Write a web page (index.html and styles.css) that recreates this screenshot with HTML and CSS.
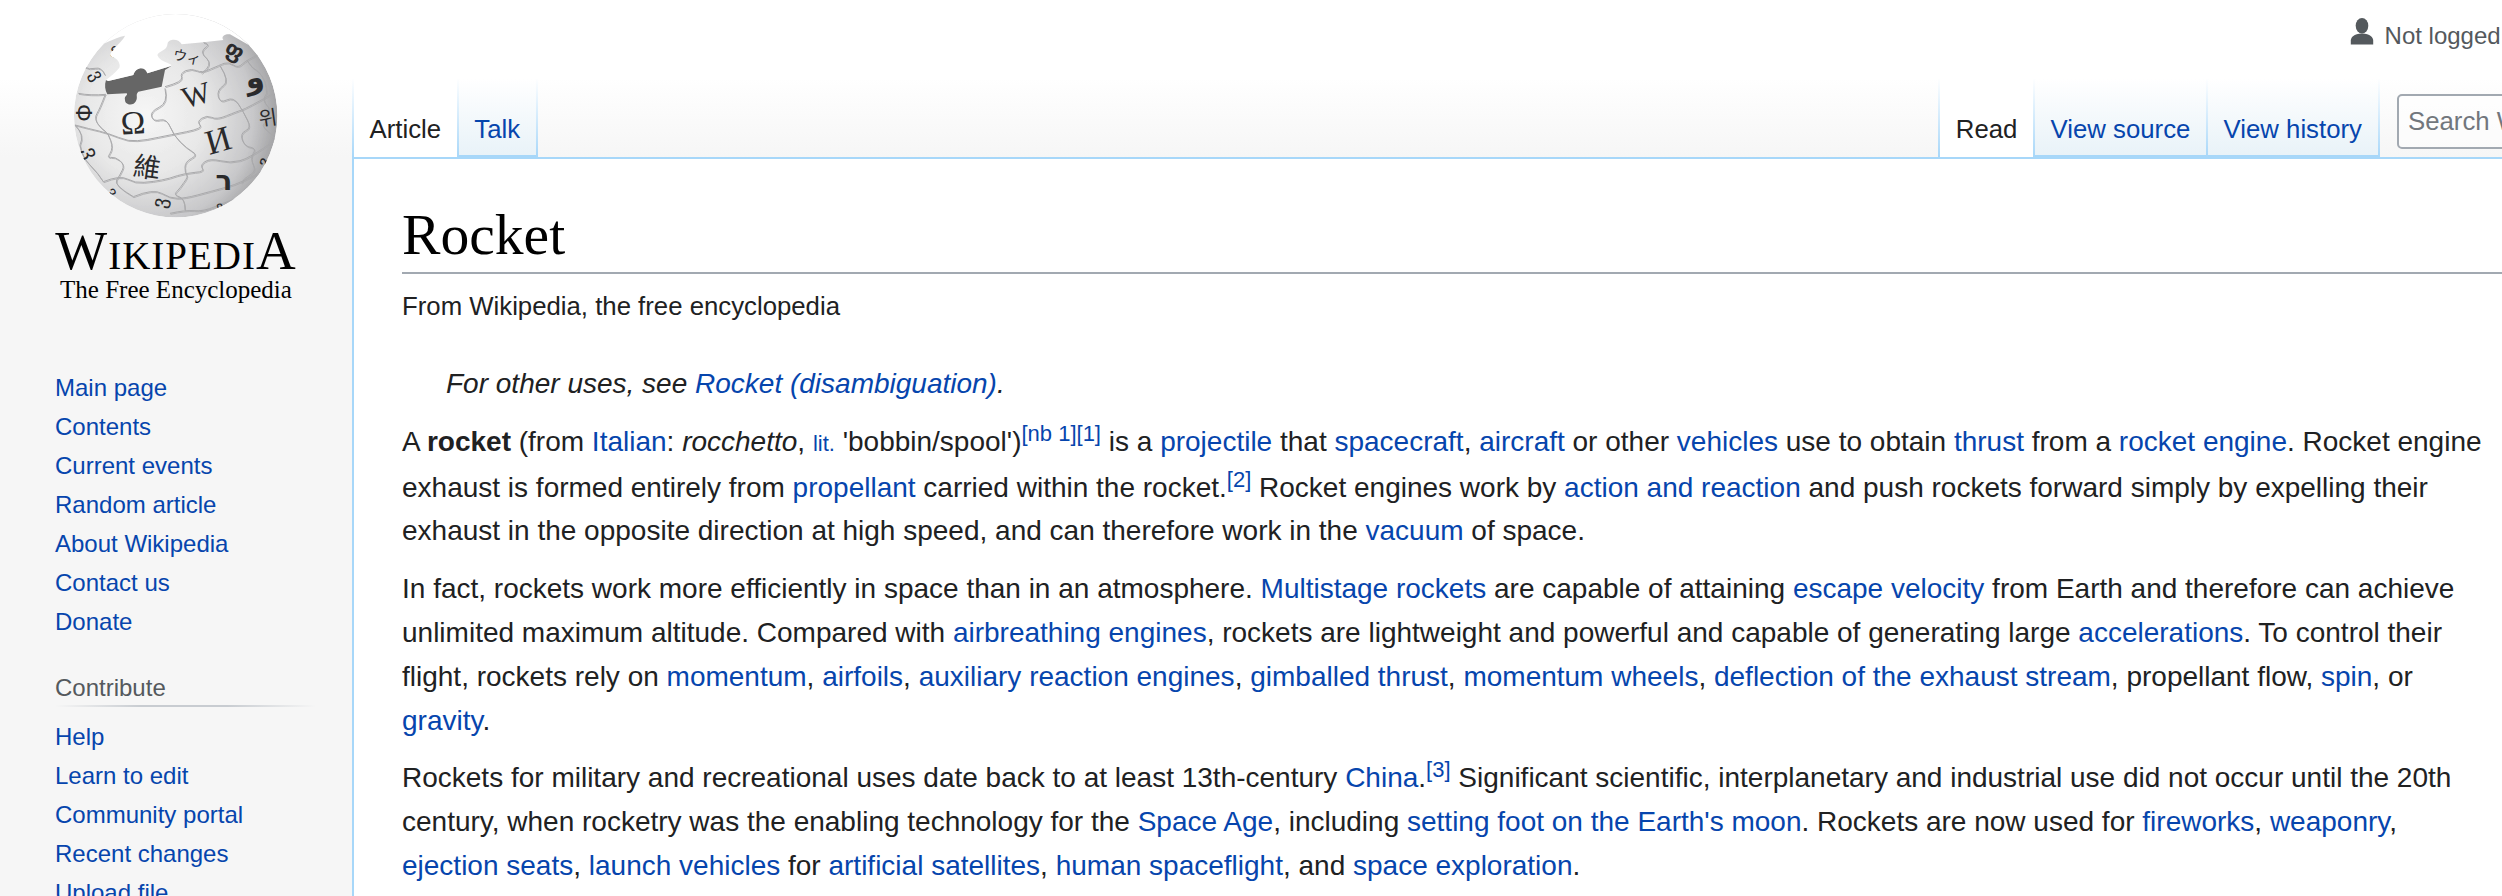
FILE: index.html
```html
<!DOCTYPE html>
<html lang="en">
<head>
<meta charset="utf-8">
<title>Rocket - Wikipedia</title>
<link rel="stylesheet" href="styles.css">
</head>
<body>
<div class="page">
  <aside class="side">
    <div class="logo">
      <svg class="globe" width="352" height="226" viewBox="0 0 352 226" xmlns="http://www.w3.org/2000/svg">
        <defs>
          <radialGradient id="ball" gradientUnits="userSpaceOnUse" cx="145" cy="115" r="150">
            <stop offset="0" stop-color="#f6f6f6"/>
            <stop offset=".4" stop-color="#e8e8e8"/>
            <stop offset=".72" stop-color="#c8c8ca"/>
            <stop offset=".9" stop-color="#a0a0a2"/>
            <stop offset="1" stop-color="#7c7c7e"/>
          </radialGradient>
          <clipPath id="shell">
            <path transform="translate(70 25) scale(.33333)" clip-rule="evenodd" d="M12 272a305 305 0 1 0 610 0a305 305 0 1 0 -610 0Z M165 32C158 48 140 60 130 75C120 85 118 90 125 95C145 100 152 118 148 128C135 145 120 155 108 165L115 168L190 150C195 128 225 120 232 145L305 122C300 112 270 112 262 90C270 75 290 80 293 55C295 42 325 38 335 58L400 52L460 45C452 35 465 25 480 28L540 62L545 -60L60 -60L60 70C100 62 130 38 165 32Z"/>
          </clipPath>
        </defs>
        <g clip-path="url(#shell)">
          <circle cx="175.7" cy="115.7" r="101.7" fill="url(#ball)"/>
          <g transform="translate(70 25) scale(.33333)">
            <g class="seam-light">
              <use href="#seams" transform="translate(2 3)"/>
            </g>
            <g id="seams" class="seam">
              <path d="M25 205Q60 212 108 208"/>
              <path d="M285 185Q340 170 335 157Q330 145 347 137Q365 130 380 137Q395 145 422 132Q450 120 462 115Q475 110 490 120Q505 130 517 117Q530 105 572 85"/>
              <path d="M15 300Q60 312 87 318Q115 325 145 337Q175 350 202 347Q230 345 265 337Q300 330 350 320Q400 310 390 300Q380 290 395 280Q410 270 425 277Q440 285 470 272Q500 260 515 255Q530 250 610 205"/>
              <path d="M100 470Q150 450 172 462Q195 475 222 472Q250 470 275 465Q300 460 322 452Q345 445 375 442Q405 440 397 430Q390 420 405 410Q420 400 450 407Q480 415 510 407Q540 400 615 345"/>
              <path d="M190 515Q250 490 275 505Q300 520 322 520Q345 520 382 510Q420 500 467 487Q515 475 590 430"/>
              <path d="M300 565Q345 555 372 557Q400 560 435 545Q470 530 530 510"/>
              <path d="M285 190Q295 235 267 247Q240 260 245 275Q250 290 270 285Q290 280 300 305Q310 330 330 350Q350 370 367 380Q385 390 365 400Q345 410 345 427Q345 445 350 450Q355 455 342 472Q330 490 320 500Q310 510 327 515Q345 520 345 555"/>
              <path d="M450 122Q480 170 460 182Q440 195 445 215Q450 235 470 225Q490 215 505 237Q520 260 532 285Q545 310 527 317Q510 325 517 345Q525 365 542 367Q560 370 550 385Q540 400 550 420Q560 440 540 450Q520 460 515 475"/>
              <path d="M105 210Q90 250 81 265Q72 280 83 296Q95 312 105 318Q115 325 122 347Q130 370 120 385Q110 400 122 397Q135 395 150 407Q165 420 157 435Q150 450 140 465Q130 480 190 515"/>
              <path d="M530 105Q545 130 565 140Q590 165 590 205Q575 225 590 240Q605 250 590 290Q570 300 590 315Q610 330 615 345"/>
              <path d="M40 125Q60 135 75 130Q95 125 105 150M15 300Q45 330 30 360Q35 395 60 420Q85 445 100 470"/>
              <path d="M395 145Q430 120 410 100Q385 80 410 65Q420 58 400 52"/>
            </g>
            <path class="hole" d="M108 165L115 168L190 150C195 128 225 120 232 145L305 122L285 135L275 185L205 200C195 210 205 215 198 228C190 245 165 240 165 225C162 212 175 212 170 205L112 208C105 195 103 180 108 165Z"/>
          </g>
          <g class="glyphs">
            <text x="133" y="134" font-size="33" transform="rotate(-4 133 123)" font-family="Liberation Serif" text-anchor="middle">Ω</text>
            <text x="196" y="105" font-size="30" transform="rotate(-16 196 95)" font-family="Liberation Serif" text-anchor="middle">W</text>
            <text x="218" y="152" font-size="35" transform="rotate(-16 218 140)" font-family="Liberation Serif" text-anchor="middle">И</text>
            <text x="147" y="177" font-size="27" transform="rotate(8 147 167)" font-family="Noto Sans CJK TC" text-anchor="middle">維</text>
            <text x="187" y="62" font-size="14" transform="rotate(12 187 57)" font-family="Noto Sans CJK JP" text-anchor="middle">ウィ</text>
            <text x="224" y="190" font-size="28" font-weight="bold" font-family="DejaVu Sans" text-anchor="middle">ר</text>
            <text x="255" y="88" font-size="30" font-weight="bold" transform="rotate(-12 255 82)" font-family="DejaVu Sans" text-anchor="middle">و</text>
            <text x="268" y="125" font-size="20" transform="rotate(-8 268 118)" font-family="Noto Sans CJK KR" text-anchor="middle">위</text>
            <text x="83" y="120" font-size="22" transform="rotate(90 83 113)" font-family="DejaVu Sans" text-anchor="middle">Փ</text>
            <text x="90" y="160" font-size="22" transform="rotate(70 90 153)" font-family="DejaVu Sans" text-anchor="middle">ვ</text>
            <text x="97" y="81" font-size="18" transform="rotate(60 97 75)" font-family="DejaVu Sans" text-anchor="middle">ვ</text>
            <text x="112" y="55" font-size="16" transform="rotate(-50 112 50)" font-family="DejaVu Sans" text-anchor="middle">ی</text>
            <text x="235" y="58" font-size="22" font-weight="bold" transform="rotate(30 235 50)" font-family="DejaVu Sans" text-anchor="middle">ფ</text>
            <text x="160" y="209" font-size="20" transform="rotate(-80 160 203)" font-family="DejaVu Sans" text-anchor="middle">ვ</text>
            <text x="265" y="168" font-size="20" transform="rotate(-70 265 162)" font-family="DejaVu Sans" text-anchor="middle">გ</text>
            <text x="112" y="197" font-size="16" transform="rotate(60 112 192)" font-family="DejaVu Sans" text-anchor="middle">ვ</text>
            <text x="220" y="211" font-size="14" transform="rotate(-25 220 207)" font-family="DejaVu Sans" text-anchor="middle">ვ</text>
          </g>
        </g>
      </svg>
      <div class="wordmark">WikipediA</div>
      <div class="tagline">The Free Encyclopedia</div>
    </div>
    <nav class="portal first">
      <ul class="links">
        <li><a href="#">Main page</a></li>
        <li><a href="#">Contents</a></li>
        <li><a href="#">Current events</a></li>
        <li><a href="#">Random article</a></li>
        <li><a href="#">About Wikipedia</a></li>
        <li><a href="#">Contact us</a></li>
        <li><a href="#">Donate</a></li>
      </ul>
    </nav>
    <nav class="portal">
      <h3 class="portal-head">Contribute</h3>
      <ul class="links">
        <li><a href="#">Help</a></li>
        <li><a href="#">Learn to edit</a></li>
        <li><a href="#">Community portal</a></li>
        <li><a href="#">Recent changes</a></li>
        <li><a href="#">Upload file</a></li>
      </ul>
    </nav>
  </aside>
  <main class="main">
    <header class="top">
      <div class="personal">
        <svg class="user" width="28" height="28" viewBox="0 0 20 20" xmlns="http://www.w3.org/2000/svg"><path d="M10 11c-5.92 0-8 3-8 5v3h16v-3c0-2-2.08-5-8-5z"/><ellipse cx="10" cy="5.5" rx="4.5" ry="5.5"/></svg>
        <span>Not logged in</span>
      </div>
      <div class="tabbar">
        <div class="tabs left">
          <a class="tab selected" href="#">Article</a>
          <a class="tab" href="#">Talk</a>
        </div>
        <div class="right-group">
          <div class="tabs">
            <a class="tab selected" href="#">Read</a>
            <a class="tab" href="#">View source</a>
            <a class="tab" href="#">View history</a>
          </div>
          <input class="search" type="text" placeholder="Search Wikipedia">
        </div>
      </div>
    </header>
    <article class="content">
      <h1 class="title">Rocket</h1>
      <div class="sub">From Wikipedia, the free encyclopedia</div>
      <div class="hatnote">For other uses, see <a href="#">Rocket (disambiguation)</a>.</div>
      <p>A <b>rocket</b> (from <a href="#">Italian</a>: <i>rocchetto</i>, <a class="abbr" href="#">lit.</a> 'bobbin/spool')<sup><a href="#">[nb 1]</a><a href="#">[1]</a></sup> is a <a href="#">projectile</a> that <a href="#">spacecraft</a>, <a href="#">aircraft</a> or other <a href="#">vehicles</a> use to obtain <a href="#">thrust</a> from a <a href="#">rocket engine</a>. Rocket engine exhaust is formed entirely from <a href="#">propellant</a> carried within the rocket.<sup><a href="#">[2]</a></sup> Rocket engines work by <a href="#">action and reaction</a> and push rockets forward simply by expelling their exhaust in the opposite direction at high speed, and can therefore work in the <a href="#">vacuum</a> of space.</p>
      <p>In fact, rockets work more efficiently in space than in an atmosphere. <a href="#">Multistage rockets</a> are capable of attaining <a href="#">escape velocity</a> from Earth and therefore can achieve unlimited maximum altitude. Compared with <a href="#">airbreathing engines</a>, rockets are lightweight and powerful and capable of generating large <a href="#">accelerations</a>. To control their flight, rockets rely on <a href="#">momentum</a>, <a href="#">airfoils</a>, <a href="#">auxiliary reaction engines</a>, <a href="#">gimballed thrust</a>, <a href="#">momentum wheels</a>, <a href="#">deflection of the exhaust stream</a>, propellant flow, <a href="#">spin</a>, or <a href="#">gravity</a>.</p>
      <p>Rockets for military and recreational uses date back to at least 13th-century <a href="#">China</a>.<sup><a href="#">[3]</a></sup> Significant scientific, interplanetary and industrial use did not occur until the 20th century, when rocketry was the enabling technology for the <a href="#">Space Age</a>, including <a href="#">setting foot on the Earth's moon</a>. Rockets are now used for <a href="#">fireworks</a>, <a href="#">weaponry</a>, <a href="#">ejection seats</a>, <a href="#">launch vehicles</a> for <a href="#">artificial satellites</a>, <a href="#">human spaceflight</a>, and <a href="#">space exploration</a>.</p>
    </article>
  </main>
</div>
</body>
</html>
```
FILE: styles.css
```css
html, body {
  margin: 0;
  height: 896px;
  overflow: hidden;
}
body {
  background: linear-gradient(#fff 0, #fff 78px, #f6f6f6 157px) #f6f6f6;
  font-family: "Liberation Sans", Arial, sans-serif;
  color: #202122;
}
a { color: #0645ad; text-decoration: none; }
.page {
  display: flex;
  width: 2552px;
  height: 896px;
  overflow: hidden;
}
.side {
  flex: 0 0 352px;
  width: 352px;
}
.logo {
  height: 336px;
  text-align: center;
  color: #000;
  font-family: "Liberation Serif", serif;
}
.globe { display: block; }
.wordmark {
  font-size: 55px;
  line-height: 50px;
  font-variant: small-caps;
  letter-spacing: 1px;
}
.tagline {
  font-size: 25px;
  line-height: 28px;
}
.hole { fill: #666; }
.glyphs { fill: #2a2a2c; }
.seam path { fill: none; stroke: #a9a9ab; stroke-width: 3; }
.seam-light { opacity: .8; }
.seam-light use { stroke: #fff; }
.portal { margin: 0 0 0 55px; }
.portal.first { margin-top: 22px; }
.portal-head {
  margin: 28px 36px 0 0;
  font-size: 24px;
  line-height: 38px;
  font-weight: normal;
  color: #54595d;
  background: linear-gradient(90deg, rgba(200,204,209,0) 0, #c8ccd1 33%, #c8ccd1 66%, rgba(200,204,209,0) 100%) no-repeat bottom / 100% 2px;
}
.links {
  list-style: none;
  margin: 0;
  padding: 10px 0 0;
  font-size: 24px;
}
.links li {
  height: 39px;
  line-height: 39px;
  white-space: nowrap;
}
.main {
  flex: 1 1 auto;
  min-width: 0;
}
.top {
  display: flex;
  flex-direction: column;
  height: 157px;
}
.personal {
  flex: 0 0 79px;
  display: flex;
  align-items: flex-start;
  justify-content: flex-end;
  gap: 9px;
  padding: 18px 26px 0 0;
  box-sizing: border-box;
  font-size: 24px;
  color: #54595d;
}
.user { fill: #54595d; display: block; }
.personal span { line-height: 30px; margin-top: 3px; }
.tabbar {
  flex: 0 0 78px;
  display: flex;
  justify-content: space-between;
}
.tabs {
  display: flex;
  height: 78px;
}
.right-group {
  display: flex;
  align-items: flex-start;
  margin-right: -45px;
}
.tabs.left { border-left: 2px solid; border-image: linear-gradient(#fff, #a7d7f9) 1; }
.tab {
  box-sizing: border-box;
  height: 78px;
  padding: 34px 15.6px 0;
  font-size: 25.76px;
  line-height: 32px;
  white-space: nowrap;
  background: linear-gradient(#fff, #e8f2f8);
  border-right: 2px solid;
  border-image: linear-gradient(#fff, #a7d7f9) 1;
  box-shadow: inset 0 -2px 0 #a7d7f9;
}
.tab.selected {
  background: #fff;
  color: #202122;
  box-shadow: none;
}
.right-group .tab.selected:first-child { border-left: 2px solid; }
.search {
  box-sizing: border-box;
  width: 200px;
  height: 55px;
  margin: 15px 0 0 17.5px;
  padding: 0 9px;
  border: 2px solid #a2a9b1;
  border-radius: 5px;
  background: rgba(255,255,255,.5);
  font: 25.76px "Liberation Sans", Arial, sans-serif;
  color: #202122;
}
.search::placeholder { color: #72777d; opacity: 1; }
.content {
  box-sizing: border-box;
  height: 739px;
  padding: 39px 62px 0 48px;
  background: #fff;
  border-top: 2px solid #a7d7f9;
  border-left: 2px solid #a7d7f9;
  font-size: 28px;
  line-height: 43.8px;
  overflow: hidden;
}
.title {
  margin: 0 -62px 0 0;
  font-family: "Liberation Serif", serif;
  font-size: 57.6px;
  font-weight: normal;
  line-height: 74px;
  color: #000;
  border-bottom: 2px solid #a2a9b1;
}
.sub {
  margin-top: 10px;
  font-size: 25.76px;
  line-height: 44px;
}
.hatnote {
  margin: 34px 0 14px;
  padding-left: 44px;
  font-style: italic;
}
.content p { margin: 14px 0; }
sup { font-size: 22px; line-height: 0; }
.abbr { font-size: 22px; }
```
